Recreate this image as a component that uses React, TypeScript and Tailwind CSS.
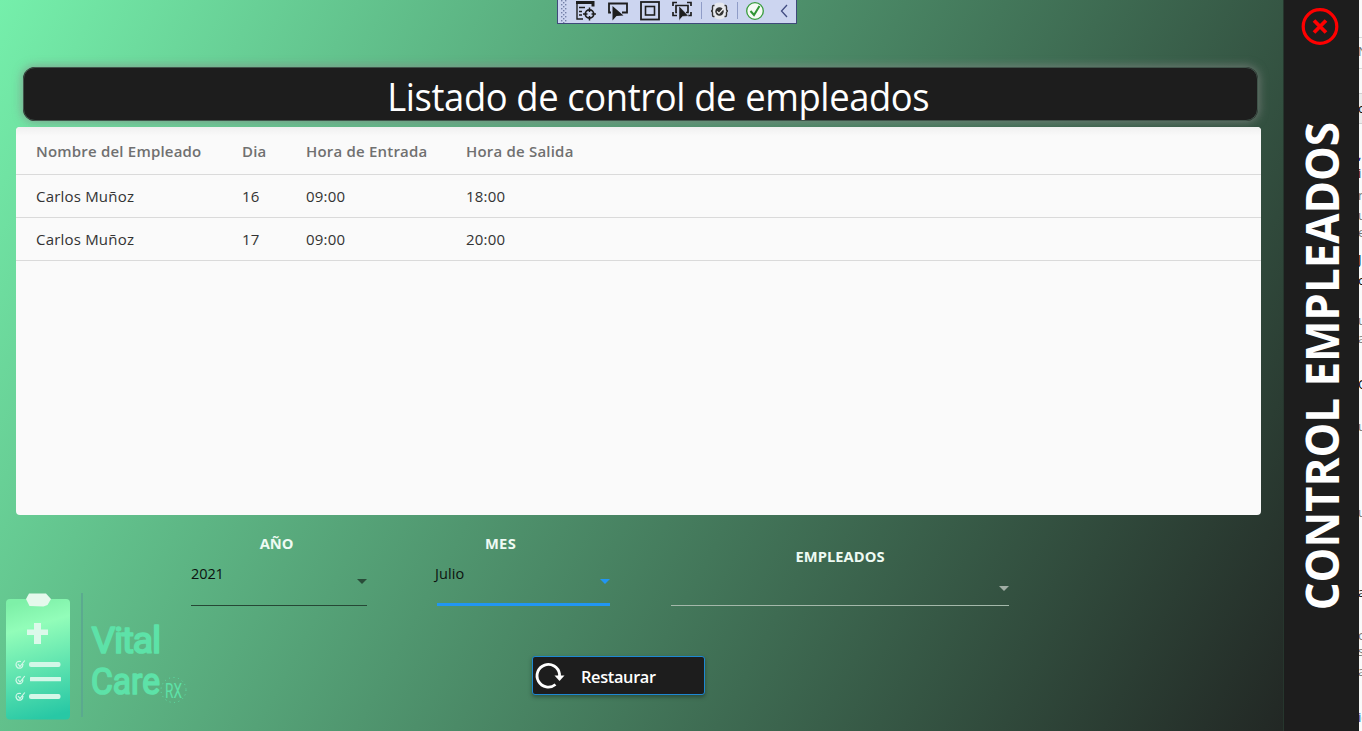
import React from "react";

const rows = [
  { name: "Carlos Muñoz", day: "16", start: "09:00", end: "18:00" },
  { name: "Carlos Muñoz", day: "17", start: "09:00", end: "20:00" },
];

const columns = "grid grid-cols-[206px_64px_160px_1fr] items-center border-b border-[#dadada] pl-5";

function DebugToolbar() {
  return (
    <div className="absolute left-[557px] top-0 h-6 w-60 border border-t-0 border-[#3f4a7a] bg-[#ccd5f0]">
      <svg width="238" height="23" viewBox="558 0 238 23" fill="none" stroke="#1e1e1e" strokeWidth="1.8">
        <g fill="#7480a8" stroke="none">
          {[0, 4, 8, 12, 16, 20].map((y) => (
            <React.Fragment key={y}>
              <rect x="561" y={y} width="1.4" height="1.4" />
              <rect x="565" y={y} width="1.4" height="1.4" />
              <rect x="563" y={y + 2} width="1.4" height="1.4" />
            </React.Fragment>
          ))}
        </g>
        <path d="M576 2.500h17v4" strokeWidth="3" />
        <path d="M577 2v17h6M579 7.500h6M579 11.500h3M579 15h3" strokeWidth="1.4" />
        <circle cx="589.500" cy="14" r="4.200" />
        <path d="M589.500 7.500v4.500M589.500 16v4.500M583 14h4.500M591.500 14h4.500" strokeWidth="1.5" />
        <path d="M611 12.500h-2v-9h18v9h-5" />
        <path d="M612.500 6v14.500l4-4.500 7-.5z" fill="#1e1e1e" stroke="none" />
        <rect x="641" y="2" width="18" height="17.500" />
        <rect x="645.500" y="6.500" width="9" height="8.500" strokeWidth="1.6" />
        <path d="M673 6V2.500h4M687 2.500h4V6M673 12v3.500h4M691 12v3.500h-3M677 12.500h-1V5.500h12v7h-2" strokeWidth="1.7" />
        <path d="M679 6v14.500l3.500-4 6-.5z" fill="#1e1e1e" stroke="#ccd5f0" strokeWidth=".5" />
        <path d="M701.500 2v17M737.500 2v17" stroke="#8f9cc7" strokeWidth="1" />
        <circle cx="719.500" cy="11" r="8.500" fill="#e7e9ee" stroke="none" />
        <path d="M714.500 5.500h-1q-1 0-1 1.500v2q0 2-1.500 2 1.500 0 1.500 2v2q0 1.500 1 1.500h1M724.500 5.500h1q1 0 1 1.500v2q0 2 1.500 2-1.500 0-1.500 2v2q0 1.500-1 1.500h-1" stroke="#333" strokeWidth="1.4" />
        <circle cx="719.500" cy="11.500" r="4.200" fill="#333" stroke="none" />
        <path d="M717 11.500l2 2 4.500-5" stroke="#f5f5f5" strokeWidth="1.200" />
        <circle cx="755" cy="11" r="8.300" fill="#f5faf5" stroke="#389c3c" strokeWidth="1.300" />
        <path d="M750.500 11l3.500 4 5.500-9" stroke="#2f9433" strokeWidth="2" />
        <path d="M787 5l-5.500 6 5.500 6" stroke="#414c82" strokeWidth="1.300" />
      </svg>
    </div>
  );
}

function Logo() {
  return (
    <svg width="191" height="216" viewBox="0 515 191 216" className="shrink-0">
      <defs>
        <linearGradient id="clip" x1="0.4" y1="0" x2="0.55" y2="1">
          <stop offset="0" stopColor="#7ef0a8" />
          <stop offset="0.22" stopColor="#92fdb9" />
          <stop offset="1" stopColor="#28c8a5" />
        </linearGradient>
      </defs>
      <rect x="6" y="599" width="64" height="120.500" rx="4" fill="url(#clip)" />
      <path d="M29 593.500h17l5 5.500-3.500 6-4 1.500-14-.5-3.500-7z" fill="#e5f9ec" />
      <path d="M34 623h7v6.500h7v5.500h-7v9h-7v-9h-7v-5.500h7z" fill="#dcf9ea" />
      <g fill="#d3f7e8">
        <rect x="29" y="662" width="31.500" height="5" rx="2" />
        <rect x="30" y="677" width="31" height="4.200" rx=".5" />
        <rect x="29" y="694" width="31.500" height="5" rx="2" />
      </g>
      <g fill="none" stroke="#d3f7e8" strokeWidth="1.200">
        {[665, 680.500, 697].map((y) => (
          <path key={y} d={`M21 ${y - 3.500}q-5-1-5 3.500 1 4 5 3 2-1 2-4M18 ${y - 1}l2 2.500 4.800-6`} />
        ))}
      </g>
      <path d="M82 593v124" stroke="#5ba890" strokeWidth="1.800" />
      <g fill="#5de2a8" stroke="#5de2a8" strokeWidth="1.700" strokeLinejoin="round" fontFamily="Roboto, sans-serif" fontWeight="400">
        <text x="91.500" y="653" fontSize="37.500" textLength="69.500" lengthAdjust="spacing">Vital</text>
        <text x="91" y="694" fontSize="37.500" textLength="69" lengthAdjust="spacingAndGlyphs">Care</text>
      </g>
      <text x="165" y="697.500" fontSize="21" textLength="17" lengthAdjust="spacingAndGlyphs" fontFamily="Roboto, sans-serif" fontWeight="400" fill="#5de2a8">RX</text>
      <circle cx="173.500" cy="690" r="12.500" fill="none" stroke="#5de2a8" strokeWidth="1" strokeDasharray="1 3.500" />
    </svg>
  );
}

function Arrow({ className }: { className: string }) {
  return (
    <svg width="10" height="5" viewBox="0 0 10 5" className={className}>
      <path d="M0 0h10L5 5z" fill="currentColor" />
    </svg>
  );
}

function Filters() {
  return (
    <div className="flex flex-1 flex-col">
      <div className="flex h-[91px] items-start">
        <div className="flex h-full w-44 flex-col border-b border-[#264735]">
          <div className="mt-[17px] h-[22px] pr-[5px] text-center text-[14.7px] font-bold leading-[22px] tracking-[-0.1px] text-[#eefaf3]">AÑO</div>
          <div className="mt-[9px] h-[22px] text-[14.5px] leading-[22px] tracking-[-0.1px] text-[#0c120f]">2021</div>
          <Arrow className="-mt-[6px] self-end text-[#294c39]" />
        </div>
        <div className="ml-[68px] flex h-full w-[175px] flex-col">
          <div className="mt-[17px] h-[22px] pr-[44px] text-center text-[14.7px] font-bold leading-[22px] tracking-[0.3px] text-[#eefaf3]">MES</div>
          <div className="mt-[9px] h-[22px] text-[14.5px] leading-[22px] tracking-[0.1px] text-[#0c120f]">Julio</div>
          <Arrow className="-mt-[6px] self-end text-[#2196f3]" />
          <div className="ml-[2px] mt-auto h-[3px] bg-[#2196f3]" />
        </div>
        <div className="ml-[61px] flex h-full w-[338px] flex-col border-b border-[#a4b8aa]">
          <div className="mt-[30px] h-[22px] text-center text-[14.7px] font-bold leading-[22px] tracking-[0.05px] text-[#eefaf3]">EMPLEADOS</div>
          <Arrow className="mt-[19px] self-end text-[#a1aea5]" />
        </div>
      </div>
      <button className="ml-[341px] mt-[50px] flex h-[39px] w-[173px] items-center rounded-[3px] border border-[#1e88d2] bg-[#1d1d1d] text-left shadow-[0_2px_4px_rgba(0,0,0,0.35)]">
        <svg width="32" height="32" viewBox="0 0 32 32" fill="none" className="ml-px">
          <path d="M21.500 24.500A11.300 11.300 0 1 1 25.500 14v2" stroke="white" strokeWidth="2.800" />
          <path d="M20.500 15.500h10L25.500 21z" fill="white" />
        </svg>
        <span className="ml-[15px] mt-[3px] origin-left scale-x-[0.962] text-[17px] font-semibold leading-6 tracking-[-0.35px] text-white">Restaurar</span>
      </button>
    </div>
  );
}

const fragments = [
  { y: 42, t: "N", c: "#777777" }, { y: 99, t: "o", c: "#000000" },
  { y: 145, t: ",", c: "#000080" }, { y: 164, t: "i", c: "#300010" },
  { y: 186, t: "n", c: "#777777" }, { y: 206, t: "u", c: "#777777" },
  { y: 223, t: "e", c: "#777777" }, { y: 250, t: "J", c: "#000000" },
  { y: 271, t: "o", c: "#000000" }, { y: 311, t: "u", c: "#777777" },
  { y: 329, t: "a", c: "#777777" }, { y: 375, t: "O", c: "#000000" },
  { y: 417, t: "u", c: "#777777" }, { y: 503, t: "u", c: "#777777" },
  { y: 583, t: "a", c: "#000000" }, { y: 626, t: "o", c: "#777777" },
  { y: 642, t: "s", c: "#777777" }, { y: 662, t: "a", c: "#777777" },
  { y: 708, t: "ic", c: "#174ea6" },
];

export default function App() {
  return (
    <div className="relative flex h-[731px] w-[1362px] overflow-hidden bg-[linear-gradient(118.2deg,#75efab_0%,#1e1e1e_100%)] font-['Open_Sans',sans-serif]">
      <main className="flex w-[1284px] shrink-0 flex-col border-r border-[#26362d] pt-[67px]">
        <h1 className="ml-[23px] flex h-[54px] w-[1235px] items-center justify-center rounded-[12px] bg-[#1d1d1d] text-[38px] font-normal leading-none tracking-[-0.4px] text-white shadow-[0_0_10px_1px_rgba(135,135,135,0.7)] outline outline-1 -outline-offset-1 outline-[#40544a]">
          <span className="ml-[36px] mt-[3px] scale-x-[0.957]">Listado de control de empleados</span>
        </h1>
        <section className="ml-4 mt-[6px] h-[388px] w-[1245px] overflow-hidden rounded bg-[#fafafa] text-[15px] text-[#333333]">
          <div className={`${columns} h-12 bg-[linear-gradient(#f0f0f0,#fafafa_9px)] pt-[2px] font-semibold tracking-[0.2px] text-[#707070]`}>
            <span>Nombre del Empleado</span><span>Dia</span><span>Hora de Entrada</span><span>Hora de Salida</span>
          </div>
          {rows.map((r) => (
            <div key={r.day} className={`${columns} h-[43px] tracking-[0.2px]`}>
              <span>{r.name}</span><span>{r.day}</span><span>{r.start}</span><span>{r.end}</span>
            </div>
          ))}
        </section>
        <div className="flex h-[216px]">
          <Logo />
          <Filters />
        </div>
      </main>
      <aside className="flex w-[75px] shrink-0 flex-col items-center bg-[#1d1d1d] pt-2">
        <svg width="38" height="38" viewBox="0 0 38 38" fill="none" stroke="#fe0000" className="-ml-[3px] shrink-0">
          <circle cx="19" cy="18.500" r="16.800" strokeWidth="3.200" />
          <path d="M13 12.500l12 12M25 12.500l-12 12" strokeWidth="3.800" />
        </svg>
        <div className="-ml-[2px] flex h-[641px] shrink-0 items-center">
          <div className="rotate-180 scale-y-[0.953] whitespace-nowrap text-[46px] font-bold leading-[60px] text-white [writing-mode:vertical-rl]">CONTROL EMPLEADOS</div>
        </div>
      </aside>
      <div className="relative w-[3px] shrink-0 overflow-hidden bg-[#fafafa]">
        <div className="mt-[37px] h-8 border-y border-[#d8d8d8]" />
        <div className="mt-6 h-[31px] border-y border-[#d0d0d0] bg-[#ebebeb]" />
        {fragments.map((f) => (
          <span key={f.y} className="absolute -left-px text-[13px] leading-[18px]" style={{ top: f.y, color: f.c }}>{f.t}</span>
        ))}
      </div>
      <DebugToolbar />
    </div>
  );
}
